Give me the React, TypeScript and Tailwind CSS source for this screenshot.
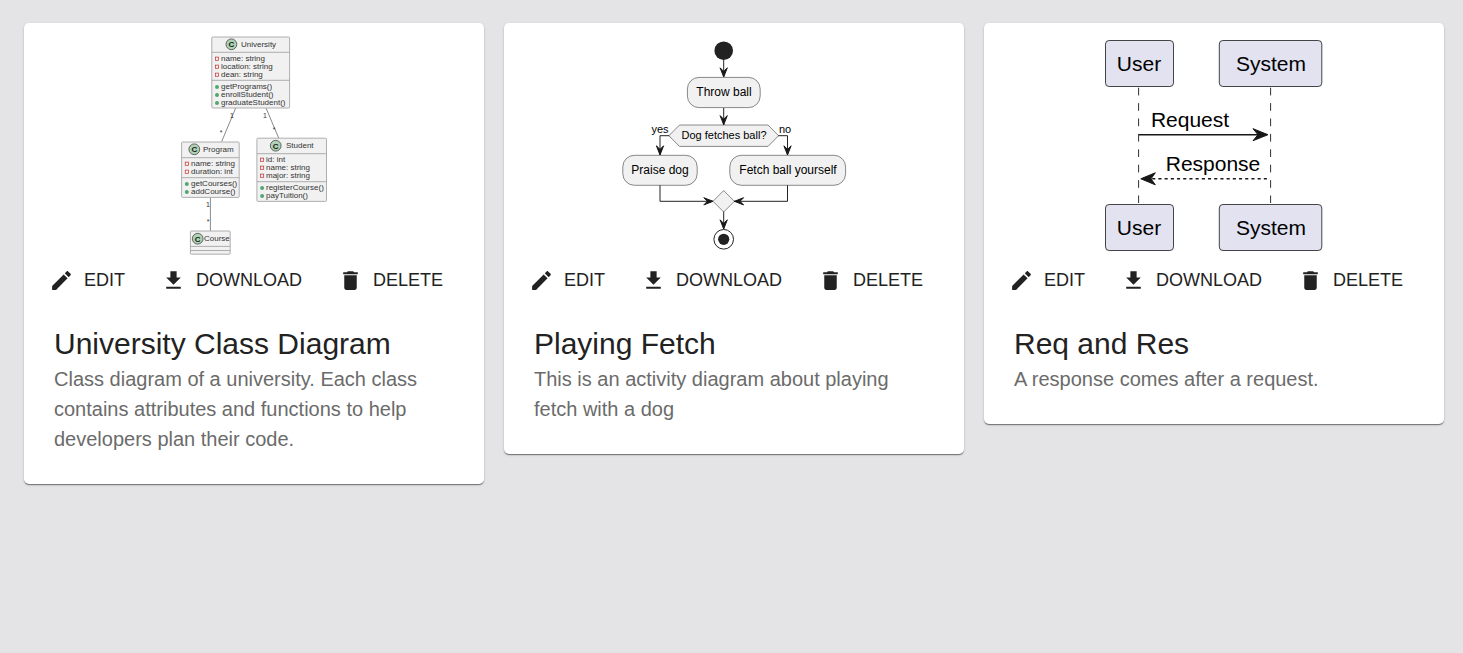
import type { ReactNode } from "react";

type Side = "down" | "left" | "right";

function ClassBadge({ x, y }: { x: number; y: number }) {
  return (
    <g>
      <circle cx={x} cy={y} r={5.4} fill="#ADD1B2" stroke="#181818" strokeWidth={0.6} />
      <text x={x} y={y + 3} textAnchor="middle" fontSize={8} fontWeight={700} fill="#181818">
        C
      </text>
    </g>
  );
}

interface ClassBoxProps {
  x: number;
  y: number;
  width: number;
  height: number;
  name: string;
  badge: [number, number];
  nameX: number;
  nameY: number;
  dividers: [number, number];
  fields?: string[];
  methods?: string[];
  fieldY?: number;
  methodY?: number;
}

function ClassBox(p: ClassBoxProps) {
  const textX = Math.floor(p.x + 10);
  const markX = p.x + 5.2;
  return (
    <g>
      <rect x={p.x} y={p.y} width={p.width} height={p.height} rx={1} fill="#F1F1F1" stroke="#A6A6A6" strokeWidth={0.9} />
      {p.dividers.map((d) => (
        <line key={d} x1={p.x} x2={p.x + p.width} y1={d} y2={d} stroke="#A6A6A6" strokeWidth={0.9} />
      ))}
      <ClassBadge x={p.badge[0]} y={p.badge[1]} />
      <text x={p.nameX} y={p.nameY} fontSize={8} fill="#333">
        {p.name}
      </text>
      {(p.fields ?? []).map((f, i) => (
        <g key={f}>
          <rect x={markX - 1.6} y={(p.fieldY ?? 0) + i * 8 - 3.9} width={3.2} height={3.2} fill="none" stroke="#C82930" strokeWidth={0.7} />
          <text x={textX} y={(p.fieldY ?? 0) + i * 8} fontSize={8} fill="#333">
            {f}
          </text>
        </g>
      ))}
      {(p.methods ?? []).map((m, i) => (
        <g key={m}>
          <circle cx={markX} cy={(p.methodY ?? 0) + i * 8 - 2} r={2} fill="#4FA873" />
          <text x={textX} y={(p.methodY ?? 0) + i * 8} fontSize={8} fill="#333">
            {m}
          </text>
        </g>
      ))}
    </g>
  );
}

function Canvas({ label, children }: { label: string; children: ReactNode }) {
  return (
    <svg
      role="img"
      aria-label={label}
      viewBox="0 0 460 235"
      className="block h-[235px] w-full"
      fontFamily="'Liberation Sans', Arial, sans-serif"
    >
      {children}
    </svg>
  );
}

function ClassDiagram() {
  return (
    <Canvas label="University class diagram">
      <g stroke="#6B6B6B" strokeWidth={0.8}>
        <line x1={211.7} y1={85} x2={197.7} y2={118.5} />
        <line x1={242} y1={85} x2={254.7} y2={115} />
        <line x1={186.4} y1={174.5} x2={186.4} y2={208} />
      </g>
      <ClassBox
        x={187.8} y={14} width={77.8} height={71} name="University" badge={[207.4, 21.3]} nameX={217} nameY={24}
        dividers={[29.3, 57.3]} fields={["name: string", "location: string", "dean: string"]} fieldY={38}
        methods={["getPrograms()", "enrollStudent()", "graduateStudent()"]} methodY={66}
      />
      <ClassBox
        x={157.6} y={119} width={57.6} height={55.4} name="Program" badge={[170.3, 126.3]} nameX={179} nameY={129}
        dividers={[134.7, 154.7]} fields={["name: string", "duration: int"]} fieldY={143}
        methods={["getCourses()", "addCourse()"]} methodY={163}
      />
      <ClassBox
        x={232.9} y={115.2} width={69.6} height={63.2} name="Student" badge={[251.7, 122.7]} nameX={262} nameY={125}
        dividers={[130.7, 158.7]} fields={["id: int", "name: string", "major: string"]} fieldY={139}
        methods={["registerCourse()", "payTuition()"]} methodY={167}
      />
      <ClassBox
        x={166.4} y={208} width={39.8} height={23.2} name="Course" badge={[173.7, 215.7]} nameX={180} nameY={218}
        dividers={[223.4, 227.5]}
      />
      <g fontSize={7} fill="#333" textAnchor="middle">
        <text x={208} y={95}>1</text>
        <text x={241} y={95}>1</text>
        <text x={197} y={112}>*</text>
        <text x={250} y={109}>*</text>
        <text x={184} y={184}>1</text>
        <text x={184} y={201}>*</text>
      </g>
    </Canvas>
  );
}

const turns: Record<Side, number> = { down: 0, left: 90, right: -90 };

function ArrowTip({ x, y, to }: { x: number; y: number; to: Side }) {
  return (
    <polygon
      points="-3.6,-9.2 0,-5.6 3.6,-9.2 0,0"
      fill="#181818"
      stroke="#181818"
      strokeWidth={1}
      transform={`translate(${x} ${y}) rotate(${turns[to]})`}
    />
  );
}

function ActivityDiagram() {
  return (
    <Canvas label="Playing fetch activity diagram">
      <g stroke="#181818" strokeWidth={0.95} fill="none">
        <path d="M219.7 36V54M219.7 85V102M166 112.7H156V132M274 112.7H283.5V132M156 162V178.3H209M283.5 162V178.3H230M219.7 188.5V206" />
      </g>
      <circle cx={219.7} cy={27.7} r={9.3} fill="#222" />
      <g fill="#F1F1F1" stroke="#181818" strokeWidth={0.5}>
        <rect x={183.4} y={54.4} width={72.8} height={30.2} rx={11.6} />
        <polygon points="175.5,102 264,102 274.6,112.7 264,123.4 175.5,123.4 164.9,112.7" />
        <rect x={118.8} y={132.3} width={74.4} height={30} rx={11.6} />
        <rect x={225.8} y={132.3} width={115.8} height={30} rx={11.6} />
        <polygon points="219.7,167.5 230.4,178.3 219.7,189 209,178.3" />
      </g>
      <ArrowTip x={219.7} y={54} to="down" />
      <ArrowTip x={219.7} y={101.8} to="down" />
      <ArrowTip x={156} y={132} to="down" />
      <ArrowTip x={283.5} y={132} to="down" />
      <ArrowTip x={209} y={178.3} to="right" />
      <ArrowTip x={230.4} y={178.3} to="left" />
      <ArrowTip x={219.7} y={206} to="down" />
      <circle cx={219.7} cy={216.3} r={9.8} fill="#fff" stroke="#222" strokeWidth={1} />
      <circle cx={219.7} cy={216.3} r={5.6} fill="#222" />
      <g fontSize={12} fill="#000" textAnchor="middle">
        <text x={220} y={73}>Throw ball</text>
        <text x={156} y={151}>Praise dog</text>
        <text x={284} y={151}>Fetch ball yourself</text>
      </g>
      <g fontSize={11} fill="#000" textAnchor="middle">
        <text x={220} y={116}>Dog fetches ball?</text>
        <text x={156} y={110}>yes</text>
        <text x={281} y={110}>no</text>
      </g>
    </Canvas>
  );
}

function SequenceDiagram() {
  return (
    <Canvas label="Request and response sequence diagram">
      <g stroke="#181818" strokeWidth={0.9} strokeDasharray="7.7 7.7">
        <line x1={154.6} y1={64.7} x2={154.6} y2={180} />
        <line x1={286.6} y1={64.7} x2={286.6} y2={180} />
      </g>
      <g fill="#E2E2F0" stroke="#181818" strokeWidth={0.8}>
        <rect x={121.5} y={17.5} width={68} height={46} rx={3.6} />
        <rect x={235.3} y={17.5} width={102.5} height={46} rx={3.6} />
        <rect x={121.5} y={181.5} width={68} height={46} rx={3.6} />
        <rect x={235.3} y={181.5} width={102.5} height={46} rx={3.6} />
      </g>
      <g stroke="#181818" strokeWidth={1.5}>
        <line x1={155} y1={111.7} x2={280} y2={111.7} />
        <line x1={162} y1={155.8} x2={285.5} y2={155.8} strokeDasharray="3.1 3.1" />
      </g>
      <g fill="#181818" stroke="#181818">
        <polygon points="284,111.7 269,105.7 274,111.7 269,117.7" />
        <polygon points="156.8,155.8 171.3,149.8 167,155.8 171.3,161.8" />
      </g>
      <g fontSize={21} fill="#000" textAnchor="middle">
        <text x={155} y={48}>User</text>
        <text x={287} y={48}>System</text>
        <text x={206} y={104}>Request</text>
        <text x={229} y={148}>Response</text>
        <text x={155} y={212}>User</text>
        <text x={287} y={212}>System</text>
      </g>
    </Canvas>
  );
}

const icons = {
  edit: "M3 17.25V21h3.75L17.81 9.94l-3.75-3.75L3 17.25zM20.71 7.04c.39-.39.39-1.02 0-1.41l-2.34-2.34c-.39-.39-1.02-.39-1.41 0l-1.83 1.83 3.75 3.75 1.83-1.83z",
  download: "M19 9h-4V3H9v6H5l7 7 7-7zM5 18v2h14v-2H5z",
  remove: "M6 19c0 1.1.9 2 2 2h8c1.1 0 2-.9 2-2V7H6v12zM19 4h-3.5l-1-1h-5l-1 1H5v2h14V4z",
};

function Action({ icon, children }: { icon: keyof typeof icons; children: ReactNode }) {
  return (
    <button
      type="button"
      className="flex h-[45px] cursor-pointer items-center gap-[10px] rounded-[5px] px-[15px] text-lg leading-[27px] uppercase hover:bg-black/5"
    >
      <svg viewBox="0 0 24 24" className="size-[25px] shrink-0 fill-current" aria-hidden="true">
        <path d={icons[icon]} />
      </svg>
      {children}
    </button>
  );
}

interface DiagramCardProps {
  title: string;
  description: string;
  children: ReactNode;
}

function DiagramCard({ title, description, children }: DiagramCardProps) {
  return (
    <article className="overflow-hidden rounded-[5px] bg-white shadow-[0_2px_1px_-1px_rgba(0,0,0,0.2),0_1px_1px_0_rgba(0,0,0,0.14),0_1px_3px_0_rgba(0,0,0,0.12),0_1px_1px_0_rgba(0,0,0,0.2)]">
      {children}
      <div className="flex flex-wrap gap-[6px] px-[10px]">
        <Action icon="edit">Edit</Action>
        <Action icon="download">Download</Action>
        <Action icon="remove">Delete</Action>
      </div>
      <div className="px-[30px] pt-[21px] pb-[30px]">
        <h2 className="text-[30px] leading-10">{title}</h2>
        <p className="text-xl leading-[30px] text-[#6b6b6b]">{description}</p>
      </div>
    </article>
  );
}

export default function App() {
  return (
    <main className="min-h-screen bg-[#e4e4e6] pt-[23px] pr-[19px] pb-6 pl-6 font-['Liberation_Sans',Arial,sans-serif] text-[#222]">
      <div className="grid grid-cols-1 items-start gap-5 md:grid-cols-2 xl:grid-cols-3">
        <DiagramCard
          title="University Class Diagram"
          description="Class diagram of a university. Each class contains attributes and functions to help developers plan their code."
        >
          <ClassDiagram />
        </DiagramCard>
        <DiagramCard title="Playing Fetch" description="This is an activity diagram about playing fetch with a dog">
          <ActivityDiagram />
        </DiagramCard>
        <DiagramCard title="Req and Res" description="A response comes after a request.">
          <SequenceDiagram />
        </DiagramCard>
      </div>
    </main>
  );
}
